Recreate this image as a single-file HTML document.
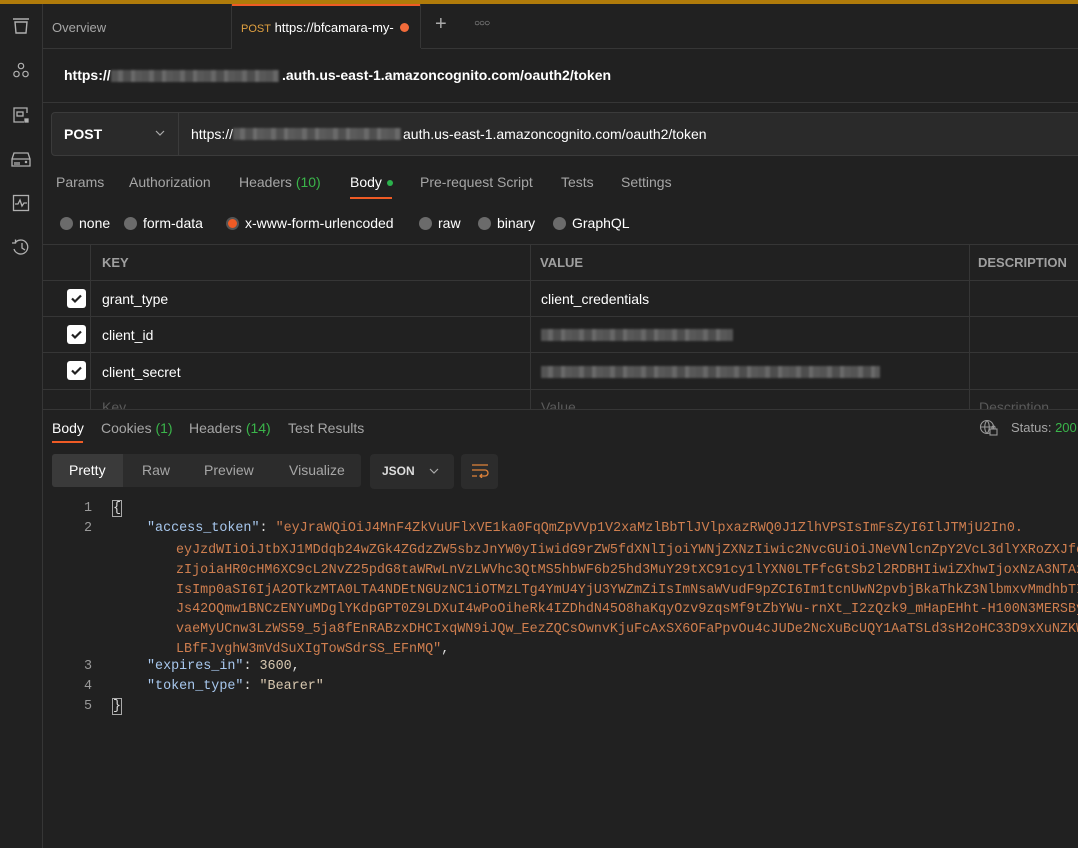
<!DOCTYPE html>
<html><head><meta charset="utf-8">
<style>
*{margin:0;padding:0;box-sizing:border-box}
body{width:1078px;height:848px;background:#212121;font-family:"Liberation Sans",Arial,sans-serif;color:#fff;position:relative;overflow:hidden;font-size:14px}
.a{position:absolute;white-space:nowrap}
.hl{position:absolute;height:1px;background:#363636}
.vl{position:absolute;width:1px;background:#363636}
.g{color:#a6a6a6}
.blur{position:absolute;height:12px;background:repeating-linear-gradient(90deg,#6a6a6a 0 7px,#858585 7px 12px,#606060 12px 20px,#8a8a8a 20px 24px,#707070 24px 31px);opacity:.7;filter:blur(1px)}
.radio{display:inline-block;width:13px;height:13px;border-radius:50%;background:#6b6b6b;vertical-align:-2px;margin-right:6px}
.cb{position:absolute;left:67px;width:19px;height:19px;background:#fff;border-radius:3px}
.cb svg{position:absolute;left:3px;top:3px}
.code{font-family:"Liberation Mono",monospace;font-size:13.4px;color:#ce7e4f}
.k{color:#a8c8ee}
.ln{position:absolute;left:80px;width:12px;text-align:right;font-family:"Liberation Mono",monospace;font-size:13.4px;color:#9a9a9a}
</style></head><body>
<div class="a" style="left:0;top:0;width:1078px;height:4px;background:#b07b0a"></div>
<div class="vl" style="left:42px;top:4px;height:844px"></div>
<svg class="a" style="left:12px;top:17px" width="18" height="18" viewBox="0 0 18 18" fill="none" stroke="#b0b0b0" stroke-width="1.4"><path d="M1 2h16M3 5h12l-1 11H4z"/></svg>
<svg class="a" style="left:12px;top:62px" width="18" height="18" viewBox="0 0 18 18" fill="none" stroke="#b0b0b0" stroke-width="1.2"><circle cx="9" cy="4" r="2.7"/><circle cx="4.5" cy="12" r="2.7"/><circle cx="13.5" cy="12" r="2.7"/></svg>
<svg class="a" style="left:12px;top:106px" width="18" height="18" viewBox="0 0 18 18" fill="none" stroke="#b0b0b0" stroke-width="1.3"><path d="M15 7V2H2v14h10"/><rect x="5" y="6" width="6" height="4"/><rect x="13" y="13" width="3" height="3" fill="#b0b0b0"/></svg>
<svg class="a" style="left:11px;top:150px" width="20" height="18" viewBox="0 0 20 18" fill="none" stroke="#b0b0b0" stroke-width="1.3"><path d="M3 3h14l2 6v7H1V9z M1 9h18"/><path d="M4 12v3M6 12v3M8 12v3"/><circle cx="15" cy="12" r=".6" fill="#b0b0b0"/></svg>
<svg class="a" style="left:12px;top:194px" width="18" height="18" viewBox="0 0 18 18" fill="none" stroke="#b0b0b0" stroke-width="1.3"><rect x="1.5" y="1.5" width="15" height="15"/><path d="M3 10h3l2-4 2 6 2-3h3"/></svg>
<svg class="a" style="left:11px;top:237px" width="20" height="20" viewBox="0 0 20 20" fill="none" stroke="#b0b0b0" stroke-width="1.3"><path d="M4 6A7 7 0 1 1 3 12"/><path d="M1 6h3.5V2.5"/><path d="M11 6v5l3 2"/></svg>
<div class="hl" style="left:43px;top:48px;width:1035px"></div>
<div class="a g" style="left:52px;top:20px;font-size:13px">Overview</div>
<div class="vl" style="left:231px;top:4px;height:44px"></div>
<div class="a" style="left:232px;top:4px;width:189px;height:45px;background:#212121;border-top:2px solid #ef5b25"></div>
<div class="vl" style="left:420px;top:4px;height:44px"></div>
<div class="a" style="left:241px;top:20px;font-size:13px"><span style="color:#e0a040;font-size:11px">POST</span> https://bfcamara-my-</div>
<div class="a" style="left:400px;top:23px;width:9px;height:9px;border-radius:50%;background:#f26b3a"></div>
<div class="a" style="left:435px;top:13px;font-size:20px;color:#aaa;font-weight:300">+</div>
<div class="a" style="left:474px;top:18px;font-size:10px;color:#aaa;letter-spacing:-1px">○○○</div>
<div class="a" style="left:64px;top:67px;font-weight:bold">https://</div>
<div class="blur" style="left:111px;top:70px;width:168px"></div>
<div class="a" style="left:282px;top:67px;font-weight:bold">.auth.us-east-1.amazoncognito.com/oauth2/token</div>
<div class="hl" style="left:43px;top:102px;width:1035px"></div>
<div class="a" style="left:51px;top:112px;width:1040px;height:44px;background:#2a2a2a;border:1px solid #3b3b3b;border-radius:4px"></div>
<div class="vl" style="left:178px;top:113px;height:42px;background:#3b3b3b"></div>
<div class="a" style="left:64px;top:126px;font-weight:bold">POST</div>
<svg class="a" style="left:155px;top:130px" width="10" height="6" viewBox="0 0 10 6" fill="none" stroke="#aaa" stroke-width="1.2"><path d="M1 1l4 4 4-4"/></svg>
<div class="a" style="left:191px;top:126px">https://</div>
<div class="blur" style="left:233px;top:128px;width:168px"></div>
<div class="a" style="left:403px;top:126px">auth.us-east-1.amazoncognito.com/oauth2/token</div>
<div class="a g" style="left:56px;top:174px">Params</div>
<div class="a g" style="left:129px;top:174px">Authorization</div>
<div class="a g" style="left:239px;top:174px">Headers <span style="color:#3ab54a">(10)</span></div>
<div class="a" style="left:350px;top:174px">Body</div>
<div class="a" style="left:387px;top:180px;width:6px;height:6px;border-radius:50%;background:#2bb24c"></div>
<div class="a" style="left:350px;top:197px;width:42px;height:2px;background:#ef5b25"></div>
<div class="a g" style="left:420px;top:174px">Pre-request Script</div>
<div class="a g" style="left:561px;top:174px">Tests</div>
<div class="a g" style="left:621px;top:174px">Settings</div>
<div class="a" style="left:60px;top:215px"><span class="radio"></span>none</div>
<div class="a" style="left:124px;top:215px"><span class="radio"></span>form-data</div>
<div class="a" style="left:226px;top:215px"><span class="radio" style="background:#ef5b25;border:2px solid #555"></span>x-www-form-urlencoded</div>
<div class="a" style="left:419px;top:215px"><span class="radio"></span>raw</div>
<div class="a" style="left:478px;top:215px"><span class="radio"></span>binary</div>
<div class="a" style="left:553px;top:215px"><span class="radio"></span>GraphQL</div>
<div class="hl" style="left:43px;top:244px;width:1035px"></div>
<div class="hl" style="left:43px;top:280px;width:1035px"></div>
<div class="hl" style="left:43px;top:316px;width:1035px"></div>
<div class="hl" style="left:43px;top:352px;width:1035px"></div>
<div class="hl" style="left:43px;top:389px;width:1035px"></div>
<div class="vl" style="left:90px;top:244px;height:166px"></div>
<div class="vl" style="left:530px;top:244px;height:166px"></div>
<div class="vl" style="left:969px;top:244px;height:166px"></div>
<div class="a" style="left:102px;top:255px;font-weight:bold;color:#a0a0a0;font-size:13px">KEY</div>
<div class="a" style="left:540px;top:255px;font-weight:bold;color:#a0a0a0;font-size:13px">VALUE</div>
<div class="a" style="left:978px;top:255px;font-weight:bold;color:#a0a0a0;font-size:13px">DESCRIPTION</div>
<div class="cb" style="top:289px"><svg width="13" height="13" viewBox="0 0 13 13" fill="none" stroke="#212121" stroke-width="2.2"><path d="M2 6.5l3 3 6-6"/></svg></div>
<div class="cb" style="top:325px"><svg width="13" height="13" viewBox="0 0 13 13" fill="none" stroke="#212121" stroke-width="2.2"><path d="M2 6.5l3 3 6-6"/></svg></div>
<div class="cb" style="top:361px"><svg width="13" height="13" viewBox="0 0 13 13" fill="none" stroke="#212121" stroke-width="2.2"><path d="M2 6.5l3 3 6-6"/></svg></div>
<div class="a" style="left:102px;top:291px">grant_type</div>
<div class="a" style="left:541px;top:291px">client_credentials</div>
<div class="a" style="left:102px;top:327px">client_id</div>
<div class="blur" style="left:541px;top:329px;width:192px"></div>
<div class="a" style="left:102px;top:364px">client_secret</div>
<div class="blur" style="left:541px;top:366px;width:339px"></div>
<div class="a" style="left:102px;top:399px;color:#5a5a5a">Key</div>
<div class="a" style="left:541px;top:399px;color:#5a5a5a">Value</div>
<div class="a" style="left:979px;top:399px;color:#5a5a5a">Description</div>
<div class="a" style="left:43px;top:409px;width:1035px;height:439px;background:#212121;border-top:1px solid #363636"></div>
<div class="a" style="left:52px;top:420px">Body</div>
<div class="a" style="left:52px;top:441px;width:31px;height:2px;background:#ef5b25"></div>
<div class="a g" style="left:101px;top:420px">Cookies <span style="color:#3ab54a">(1)</span></div>
<div class="a g" style="left:189px;top:420px">Headers <span style="color:#3ab54a">(14)</span></div>
<div class="a g" style="left:288px;top:420px">Test Results</div>
<svg class="a" style="left:979px;top:419px" width="20" height="17" viewBox="0 0 20 17" fill="none" stroke="#999" stroke-width="1.1"><circle cx="8" cy="8" r="6.5"/><path d="M1.5 8h13M8 1.5c-3 3-3 10 0 13M8 1.5c3 3 3 10 0 13"/><rect x="11" y="10" width="7" height="6" fill="#212121"/><path d="M13 10V8.5a1.5 1.5 0 0 1 3 0V10"/></svg>
<div class="a g" style="left:1011px;top:420px;font-size:13px">Status: <span style="color:#3ab54a">200</span></div>
<div class="a" style="left:52px;top:454px;width:309px;height:33px;background:#2c2c2c;border-radius:3px"></div>
<div class="a" style="left:52px;top:454px;width:71px;height:33px;background:#3a3a3a;border-radius:3px 0 0 3px"></div>
<div class="a" style="left:69px;top:462px">Pretty</div>
<div class="a g" style="left:142px;top:462px">Raw</div>
<div class="a g" style="left:204px;top:462px">Preview</div>
<div class="a g" style="left:289px;top:462px">Visualize</div>
<div class="a" style="left:370px;top:454px;width:84px;height:35px;background:#2c2c2c;border-radius:4px"></div>
<div class="a" style="left:382px;top:464px;font-weight:bold;color:#ddd;font-size:12px">JSON</div>
<svg class="a" style="left:429px;top:468px" width="10" height="6" viewBox="0 0 10 6" fill="none" stroke="#aaa" stroke-width="1.2"><path d="M1 1l4 4 4-4"/></svg>
<div class="a" style="left:461px;top:454px;width:37px;height:35px;background:#2c2c2c;border-radius:4px"></div>
<svg class="a" style="left:471px;top:464px" width="18" height="14" viewBox="0 0 18 14" fill="none" stroke="#e0833a" stroke-width="1.3"><path d="M1 1h16M1 6h13a3 3 0 0 1 0 6H9M11 10l-2 2 2 2M1 12h5"/></svg>
<div class="ln" style="top:501px">1</div>
<div class="ln" style="top:521px">2</div>
<div class="ln" style="top:659px">3</div>
<div class="ln" style="top:679px">4</div>
<div class="ln" style="top:699px">5</div>
<div class="a code" style="left:113px;top:501px;color:#ddd;outline:1px solid #aaa">{</div>
<div class="a code" style="left:113px;top:699px;color:#ddd;outline:1px solid #aaa">}</div>
<div class="a code" style="left:147px;top:521px;width:931px;overflow:hidden"><span class="k">"access_token"</span><span style="color:#ddd">: </span>"eyJraWQiOiJ4MnF4ZkVuUFlxVE1ka0FqQmZpVVp1V2xaMzlBbTlJVlpxazRWQ0J1ZlhVPSIsImFsZyI6IlJTMjU2In0.</div>
<div class="a code" style="left:176px;top:541px;width:902px;overflow:hidden;line-height:19.8px">eyJzdWIiOiJtbXJ1MDdqb24wZGk4ZGdzZW5sbzJnYW0yIiwidG9rZW5fdXNlIjoiYWNjZXNzIiwic2NvcGUiOiJNeVNlcnZpY2VcL3dlYXRoZXJfcmVhZCIsImF1dGhfdGltZSI6MTY<br>zIjoiaHR0cHM6XC9cL2NvZ25pdG8taWRwLnVzLWVhc3QtMS5hbWF6b25hd3MuY29tXC91cy1lYXN0LTFfcGtSb2l2RDBHIiwiZXhwIjoxNzA3NTAxMzA5LCJpYXQiOjE3MDc0OTc3<br>IsImp0aSI6IjA2OTkzMTA0LTA4NDEtNGUzNC1iOTMzLTg4YmU4YjU3YWZmZiIsImNsaWVudF9pZCI6Im1tcnUwN2pvbjBkaThkZ3NlbmxvMmdhbTIiLCJ1c2VybmFtZSI6Im1tcnUw<br>Js42OQmw1BNCzENYuMDglYKdpGPT0Z9LDXuI4wPoOiheRk4IZDhdN45O8haKqyOzv9zqsMf9tZbYWu-rnXt_I2zQzk9_mHapEHht-H100N3MERSBykLw3kG6fkR3T<br>vaeMyUCnw3LzWS59_5ja8fEnRABzxDHCIxqWN9iJQw_EezZQCsOwnvKjuFcAxSX6OFaPpvOu4cJUDe2NcXuBcUQY1AaTSLd3sH2oHC33D9xXuNZKWbQ2dkT9<br>LBfFJvghW3mVdSuXIgTowSdrSS_EFnMQ"<span style="color:#ddd">,</span></div>
<div class="a code" style="left:147px;top:659px"><span class="k">"expires_in"</span><span style="color:#ddd">: </span><span style="color:#d8c8b0">3600</span><span style="color:#ddd">,</span></div>
<div class="a code" style="left:147px;top:679px"><span class="k">"token_type"</span><span style="color:#ddd">: </span><span style="color:#d8c8b0">"Bearer"</span></div>
</body></html>
